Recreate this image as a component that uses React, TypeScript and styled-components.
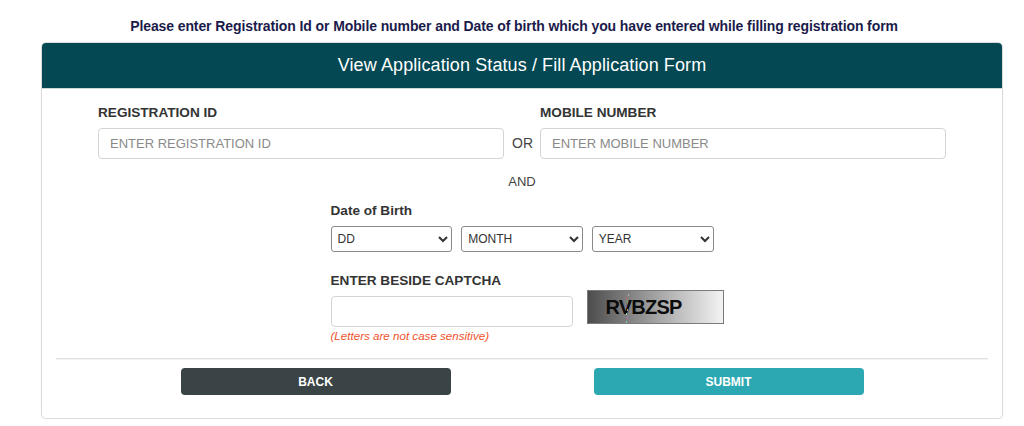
import React from "react";
import styled, { createGlobalStyle } from "styled-components";

const GlobalStyle = createGlobalStyle`
  html, body { margin: 0; padding: 0; background: #ffffff; }
  body { font-family: "Liberation Sans", Arial, sans-serif; color: #333; }
  * { box-sizing: border-box; }
`;

const Page = styled.div`
  width: 1024px;
  padding: 18px 21px 0 41px;
`;

const Intro = styled.p`
  margin: 0 0 8px;
  padding-right: 16px;
  font-size: 14px;
  line-height: 16px;
  font-weight: bold;
  color: #1b1b4b;
  text-align: center;
  letter-spacing: -0.1px;
`;

const Card = styled.div`
  width: 962px;
  border: 1px solid #dcdcdc;
  border-radius: 5px;
  overflow: hidden;
  background: #fff;
  box-shadow: 0 1px 2px rgba(0, 0, 0, 0.06);
`;

const CardHeader = styled.div`
  height: 46px;
  background: #034852;
  color: #ffffff;
  display: flex;
  align-items: center;
  justify-content: center;
  font-size: 18px;
  letter-spacing: 0.1px;
  border-bottom: 1px solid #cfd8da;
`;

const CardBody = styled.div`
  padding: 16px 14px 23px;
  display: flex;
  flex-direction: column;
  align-items: center;
`;

const IdRow = styled.div`
  display: grid;
  grid-template-columns: 406px auto 406px;
  column-gap: 8px;
  align-items: end;
  width: 848px;
`;

const Field = styled.div`
  display: flex;
  flex-direction: column;
`;

const Label = styled.label`
  font-size: 13.6px;
  line-height: 16px;
  font-weight: bold;
  color: #333;
  margin-bottom: 7px;
`;

const TextInput = styled.input<{ $w?: number }>`
  width: ${(p) => (p.$w ? `${p.$w}px` : "100%")};
  height: 31px;
  border: 1px solid #d4d4d4;
  border-radius: 4px;
  padding: 0 11px;
  font-family: "Liberation Sans", Arial, sans-serif;
  font-size: 13px;
  color: #333;
  outline: none;
  &::placeholder { color: #8a8a8a; }
`;

const Or = styled.span`
  font-size: 14px;
  line-height: 31px;
  color: #444;
  width: 20px;
  text-align: center;
`;

const And = styled.div`
  margin-top: 15px;
  font-size: 13px;
  line-height: 16px;
  color: #444;
`;

const Block = styled.div`
  width: 383px;
  display: flex;
  flex-direction: column;
  margin-top: 13px;
`;

const Selects = styled.div`
  display: flex;
  gap: 9px;
`;

const Select = styled.select`
  width: 122px;
  height: 26px;
  border: 1px solid #8a8a8a;
  border-radius: 3px;
  background: #fff;
  font-family: "Liberation Sans", Arial, sans-serif;
  font-size: 12px;
  color: #333;
  padding: 0 2px;
`;

const CaptchaRow = styled.div`
  display: flex;
  align-items: flex-start;
  gap: 14px;
  margin-top: 21px;
`;

const CaptchaImage = styled.div`
  position: relative;
  flex-shrink: 0;
  margin-top: 17px;
  width: 137px;
  height: 34px;
  border: 1px solid #7a7a7a;
  background: linear-gradient(90deg, #4d4d4d 0%, #9a9a9a 45%, #f3f3f3 100%);
  display: flex;
  align-items: center;
  padding-left: 18px;
  font-size: 20px;
  font-weight: bold;
  letter-spacing: -0.8px;
  color: #0c0c0c;
  overflow: hidden;
`;

const Noise = styled.svg`
  position: absolute;
  left: 0;
  top: 0;
`;

const Hint = styled.div`
  margin-top: 2px;
  font-size: 11.6px;
  line-height: 13px;
  font-style: italic;
  color: #f0522c;
`;

const Divider = styled.hr`
  align-self: stretch;
  margin: 16px 0 9px;
  border: none;
  border-top: 1px solid #e2e2e2;
  box-shadow: 0 1px 0 #f2f2f2;
`;

const Actions = styled.div`
  display: flex;
  justify-content: center;
  gap: 143px;
`;

const Button = styled.button<{ $variant: "dark" | "teal" }>`
  width: 270px;
  height: 27px;
  border: none;
  border-radius: 4px;
  background: ${(p) => (p.$variant === "dark" ? "#3a4446" : "#2ba8b2")};
  color: #fff;
  font-family: "Liberation Sans", Arial, sans-serif;
  font-size: 12px;
  font-weight: bold;
  cursor: pointer;
`;

const noiseDots = [
  [38, 6, "#c66"], [39, 10, "#6a6"], [38, 14, "#66c"], [39, 18, "#c96"],
  [38, 22, "#9c9"], [39, 26, "#c6c"], [38, 30, "#6cc"], [40, 3, "#aaa"],
];

export default function App() {
  return (
    <>
      <GlobalStyle />
      <Page>
        <Intro>
          Please enter Registration Id or Mobile number and Date of birth which you have entered while filling registration form
        </Intro>
        <Card>
          <CardHeader>View Application Status / Fill Application Form</CardHeader>
          <CardBody>
            <IdRow>
              <Field>
                <Label>REGISTRATION ID</Label>
                <TextInput placeholder="ENTER REGISTRATION ID" />
              </Field>
              <Or>OR</Or>
              <Field>
                <Label>MOBILE NUMBER</Label>
                <TextInput placeholder="ENTER MOBILE NUMBER" />
              </Field>
            </IdRow>
            <And>AND</And>
            <Block>
              <Label>Date of Birth</Label>
              <Selects>
                <Select defaultValue="">
                  <option value="">DD</option>
                </Select>
                <Select defaultValue="">
                  <option value="">MONTH</option>
                </Select>
                <Select defaultValue="">
                  <option value="">YEAR</option>
                </Select>
              </Selects>
              <CaptchaRow>
                <Field>
                  <Label>ENTER BESIDE CAPTCHA</Label>
                  <TextInput $w={242} />
                  <Hint>(Letters are not case sensitive)</Hint>
                </Field>
                <CaptchaImage>
                  <Noise width="137" height="34">
                    {noiseDots.map(([x, y, c], i) => (
                      <rect key={i} x={x as number} y={y as number} width="1" height="2" fill={c as string} />
                    ))}
                  </Noise>
                  RVBZSP
                </CaptchaImage>
              </CaptchaRow>
            </Block>
            <Divider />
            <Actions>
              <Button $variant="dark">BACK</Button>
              <Button $variant="teal">SUBMIT</Button>
            </Actions>
          </CardBody>
        </Card>
      </Page>
    </>
  );
}
